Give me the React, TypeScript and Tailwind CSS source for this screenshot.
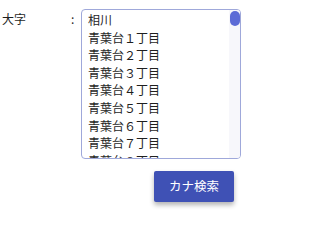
import React from 'react';

const FONT = '"Noto Sans CJK JP", "Noto Sans", sans-serif';

const items = [
  '相川',
  '青葉台１丁目',
  '青葉台２丁目',
  '青葉台３丁目',
  '青葉台４丁目',
  '青葉台５丁目',
  '青葉台６丁目',
  '青葉台７丁目',
  '青葉台８丁目',
];

export default function App() {
  return (
    <div className="w-[280px] h-[213px] bg-white text-[#1f1f1f]" style={{ fontFamily: FONT }}>
      <div className="flex pt-[9px]">
        {/* label */}
        <div className="w-[81px] flex pl-[2px] pt-[1px] text-[12px] leading-[17px]">
          <span className="w-[69px]">大字</span>
          <span>:</span>
        </div>

        {/* list box */}
        <div className="relative w-[160px] h-[150px] border border-[#9fa8da] rounded-[4px] overflow-hidden">
          <ul className="pl-[6px] pt-[1px] text-[12px] leading-[17.6px]">
            {items.map((it) => (
              <li key={it} className="whitespace-nowrap">{it}</li>
            ))}
          </ul>
          <div className="absolute right-0 top-0 bottom-0 w-[11px] bg-[#f7f7fb]">
            <div className="mx-auto mt-[1px] w-[10px] h-[15px] rounded-full bg-[#5c6bd6]" />
          </div>
        </div>
      </div>

      <div className="flex justify-end pr-[46px] pt-[12px]">
        <button className="w-[80px] h-[31px] rounded-[2px] bg-[#3f51b5] text-white text-[12.5px] shadow-[0_3px_5px_rgba(0,0,0,0.3)]">
          カナ検索
        </button>
      </div>
    </div>
  );
}
